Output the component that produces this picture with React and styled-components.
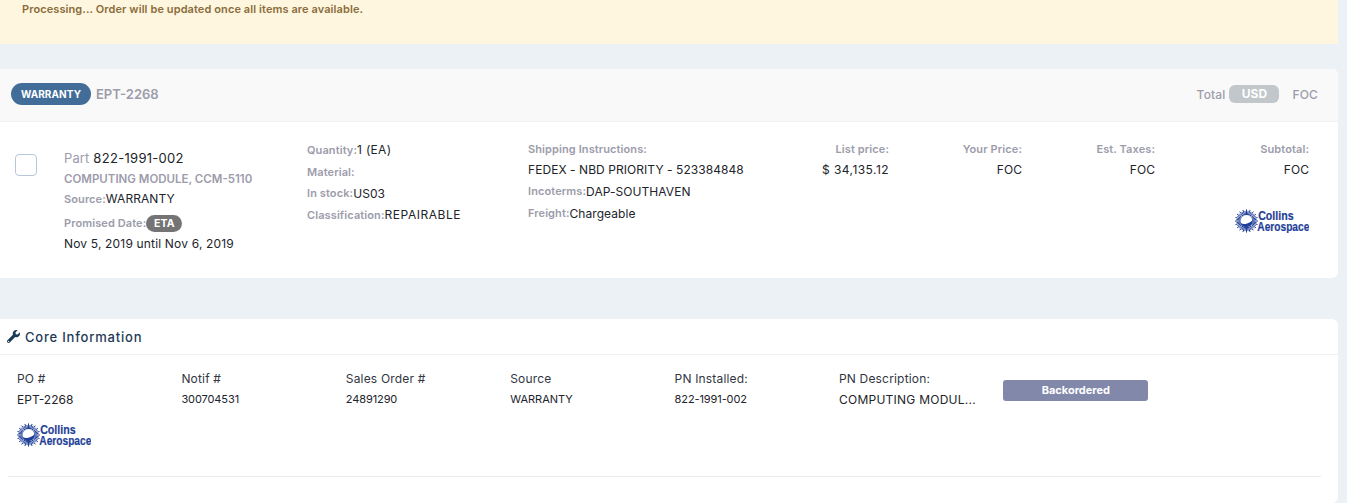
import React from "react";
import styled, { createGlobalStyle } from "styled-components";
import { FaWrench } from "react-icons/fa";

const Global = createGlobalStyle`
  html, body { margin: 0; padding: 0; background: #ecf1f5; font-family: Inter, "Liberation Sans", sans-serif; }
  body { height: 503px; overflow: hidden; }
`;
const Page = styled.div`
  width: 1338px;
  display: flex;
  flex-direction: column;
`;
const Banner = styled.div`
  height: 44px;
  box-sizing: border-box;
  padding: 2px 22px 0;
  background: #fff6e0;
  color: #8a6d3b;
  font-size: 11px;
  line-height: 14px;
  font-weight: 600;
  letter-spacing: 0.09px;
  margin-bottom: 25px;
`;
const Card = styled.section`
  background: #fff;
  border-radius: 0 6px 6px 0;
  overflow: hidden;
  margin-bottom: ${(p) => (p.$last ? 0 : 41)}px;
`;
const OrderHeader = styled.header`
  height: 53px;
  box-sizing: border-box;
  background: #f9f9f9;
  border-bottom: 1px solid #f1f1f3;
  display: flex;
  align-items: center;
  padding: 0 20px 2px 11px;
`;
const TypePill = styled.span`
  background: #426d98;
  color: #fff;
  font-size: 10px;
  font-weight: 700;
  letter-spacing: 0.1px;
  height: 22px;
  line-height: 22px;
  width: 80px;
  text-align: center;
  border-radius: 11px;
`;
const OrderNumber = styled.span`
  color: #9c9cab;
  font-size: 13px;
  font-weight: 600;
  margin-left: 5px;
  flex: 1;
`;
const TotalLabel = styled.span`
  color: #9c9cab;
  font-size: 12px;
  font-weight: 500;
  letter-spacing: 0.15px;
`;
const CurrencyPill = styled.span`
  background: #c1c7ca;
  color: #fff;
  font-size: 12px;
  font-weight: 700;
  width: 50px;
  height: 18px;
  line-height: 18px;
  text-align: center;
  border-radius: 6px;
  margin: 0 13px 0 4px;
`;
const OrderBody = styled.div`
  height: 156px;
  display: grid;
  grid-template-columns: 49px 243px 221px 228px 133px 133px 133px 154px;
  padding-left: 15px;
`;
const CheckBox = styled.span`
  display: block;
  width: 20px;
  height: 20px;
  margin-top: 32px;
  border: 1px solid #b7c6d8;
  border-radius: 4px;
  background: #fff;
`;
const Column = styled.div`
  padding-top: ${(p) => p.$top}px;
  display: flex;
  flex-direction: column;
  align-items: ${(p) => (p.$end ? "flex-end" : "flex-start")};
`;
const Line = styled.div`
  height: ${(p) => p.$h || 21.7}px;
  display: flex;
  align-items: center;
  white-space: nowrap;
  color: #22242b;
  font-size: 12px;
  letter-spacing: 0.06px;
`;
const Label = styled.span`
  color: #9c9cab;
  font-size: 11px;
  font-weight: 600;
  letter-spacing: 0.1px;
`;
const Description = styled(Label)`
  font-size: 11.5px;
  letter-spacing: 0;
`;
const PartLabel = styled.span`
  color: #9c9cab;
  font-size: 13px;
  letter-spacing: 0.1px;
  margin-right: 4px;
`;
const PartNumber = styled.span`
  color: #22242b;
  font-size: 13px;
  letter-spacing: 0.3px;
`;
const WideValue = styled.span`
  letter-spacing: ${(p) => p.$spacing}px;
`;
const EtaPill = styled.span`
  background: #747474;
  color: #fff;
  font-size: 10.5px;
  font-weight: 700;
  width: 36px;
  height: 17px;
  line-height: 17px;
  text-align: center;
  border-radius: 9px;
`;
const DateLine = styled(Line)`
  letter-spacing: 0.17px;
  position: relative;
  top: -1px;
`;
const LogoSlot = styled.div`
  margin-top: 29px;
`;
const CoreHeader = styled.header`
  height: 36px;
  box-sizing: border-box;
  border-bottom: 1px solid #f1f1f3;
  display: flex;
  align-items: center;
  gap: 5px;
  padding: 0 0 0 7px;
  color: #1d3a55;
  font-size: 13px;
  font-weight: 500;
  letter-spacing: 0.8px;
`;
const CoreBody = styled.div`
  padding: 13px 17px 26px 17px;
`;
const CoreGrid = styled.div`
  display: grid;
  grid-template-columns: repeat(6, 164.4px) 145px;
`;
const CoreCell = styled.div`
  display: flex;
  flex-direction: column;
`;
const CoreLabel = styled.div`
  color: #32363f;
  font-size: 12px;
  line-height: 21px;
  letter-spacing: 0.18px;
`;
const CoreValue = styled.div`
  color: #22242b;
  font-size: ${(p) => (p.$small ? 11 : 12)}px;
  letter-spacing: ${(p) => p.$spacing}px;
  line-height: 21px;
  white-space: nowrap;
`;
const StatusBadge = styled.div`
  margin-top: 12px;
  height: 21px;
  line-height: 20px;
  border-radius: 3px;
  background: #8188a9;
  color: #fff;
  font-size: 11px;
  font-weight: 700;
  text-align: center;
`;
const CoreLogo = styled.div`
  margin-top: 13px;
  height: 24px;
`;
const Rule = styled.hr`
  margin: 29px 0 0 -9px;
  width: 1313px;
  border: 0;
  border-top: 1px solid #e9ebee;
`;

const BLUE = "#1f3f98";

function Logo() {
  const rays = Array.from({ length: 40 }, (_, i) => {
    const a = (i * 9 * Math.PI) / 180;
    const outer = i % 2 ? 10.2 : 11.6;
    return (
      <line
        key={i}
        x1={11.5 + Math.cos(a) * 6}
        y1={12 + Math.sin(a) * 6}
        x2={11.5 + Math.cos(a) * outer}
        y2={12 + Math.sin(a) * outer}
        stroke={BLUE}
        strokeWidth="1"
      />
    );
  });
  const letters = {
    fontFamily: "'Liberation Sans',sans-serif",
    fontWeight: 700,
    fontSize: 12.5,
    fill: BLUE,
    stroke: BLUE,
    strokeWidth: 0.2,
  };
  return (
    <svg width="74" height="24" viewBox="0 0 74 24" style={{ display: "block" }}>
      {rays}
      <path d="M5 11.5 A6.5 6.5 0 0 0 18 11.5 A6.6 3.6 0 0 1 5 11.5Z" fill={BLUE} transform="rotate(-15 11.5 12)" />
      <text transform="translate(23.2 10.5) scale(0.85 1)" {...letters}>Collins</text>
      <text transform="translate(22.3 22) scale(0.815 1)" {...letters}>Aerospace</text>
    </svg>
  );
}

const core = [
  ["PO #", "EPT-2268", false, 0],
  ["Notif #", "300704531", true, -0.1],
  ["Sales Order #", "24891290", true, -0.1],
  ["Source", "WARRANTY", true, 0],
  ["PN Installed:", "822-1991-002", true, -0.1],
  ["PN Description:", "COMPUTING MODUL...", false, 0.25],
];

export default function App() {
  return (
    <Page>
      <Global />
      <Banner>Processing... Order will be updated once all items are available.</Banner>
      <Card>
        <OrderHeader>
          <TypePill>WARRANTY</TypePill>
          <OrderNumber>EPT-2268</OrderNumber>
          <TotalLabel>Total</TotalLabel>
          <CurrencyPill>USD</CurrencyPill>
          <TotalLabel>FOC</TotalLabel>
        </OrderHeader>
        <OrderBody>
          <div><CheckBox /></div>
          <Column $top={26}>
            <Line $h={20}><PartLabel>Part</PartLabel><PartNumber>822-1991-002</PartNumber></Line>
            <Line $h={21}><Description>COMPUTING MODULE, CCM-5110</Description></Line>
            <Line $h={19}><Label>Source:</Label>WARRANTY</Line>
            <Line $h={30}><Label>Promised Date:</Label><EtaPill>ETA</EtaPill></Line>
            <DateLine $h={12}>Nov 5, 2019 until Nov 6, 2019</DateLine>
          </Column>
          <Column $top={17}>
            <Line><Label>Quantity:</Label><WideValue $spacing={0.3}>1 (EA)</WideValue></Line>
            <Line><Label>Material:</Label></Line>
            <Line><Label>In stock:</Label>US03</Line>
            <Line><Label>Classification:</Label><WideValue $spacing={0.55}>REPAIRABLE</WideValue></Line>
          </Column>
          <Column $top={17}>
            <Line $h={20}><Label>Shipping Instructions:</Label></Line>
            <Line $h={21}>FEDEX - NBD PRIORITY - 523384848</Line>
            <Line $h={22}><Label>Incoterms:</Label>DAP-SOUTHAVEN</Line>
            <Line $h={22}><Label>Freight:</Label>Chargeable</Line>
          </Column>
          <Column $top={17} $end>
            <Line $h={20}><Label>List price:</Label></Line>
            <Line $h={21}><WideValue $spacing={0.45}>$ 34,135.12</WideValue></Line>
          </Column>
          <Column $top={17} $end>
            <Line $h={20}><Label>Your Price:</Label></Line>
            <Line $h={21}>FOC</Line>
          </Column>
          <Column $top={17} $end>
            <Line $h={20}><Label>Est. Taxes:</Label></Line>
            <Line $h={21}>FOC</Line>
          </Column>
          <Column $top={17} $end>
            <Line $h={20}><Label>Subtotal:</Label></Line>
            <Line $h={21}>FOC</Line>
            <LogoSlot><Logo /></LogoSlot>
          </Column>
        </OrderBody>
      </Card>
      <Card $last>
        <CoreHeader><FaWrench size={13} />Core Information</CoreHeader>
        <CoreBody>
          <CoreGrid>
            {core.map(([label, value, small, spacing]) => (
              <CoreCell key={label}>
                <CoreLabel>{label}</CoreLabel>
                <CoreValue $small={small} $spacing={spacing}>{value}</CoreValue>
              </CoreCell>
            ))}
            <StatusBadge>Backordered</StatusBadge>
          </CoreGrid>
          <CoreLogo><Logo /></CoreLogo>
          <Rule />
        </CoreBody>
      </Card>
    </Page>
  );
}
